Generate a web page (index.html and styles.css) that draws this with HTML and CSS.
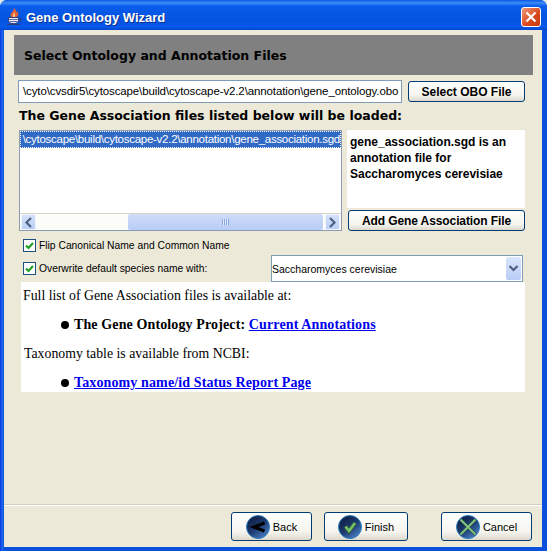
FILE: index.html
```html
<!DOCTYPE html>
<html lang="en">
<head>
  <meta charset="UTF-8" />
  <title>Gene Ontology Wizard</title>
  <link rel="stylesheet" href="styles.css">
</head>
<body>
  <div class="window">
    <div class="titlebar">
      <svg class="java-icon" width="17" height="18" viewBox="0 0 17 18">
        <path d="M8 0c1.500 2 3 3 2.500 5 1-.5 1-1.500 1-2 1.500 2 1 5-1 6H5.500C3.500 7.500 5 5 6.500 4 7 3 8 2 8 0z" fill="#e8622c"/>
        <path d="M8 4c.5 1.500 1.500 2 1 5H7C6.500 7.500 7.500 6 8 4z" fill="#f8c090"/>
        <path d="M2.500 9.500h10v3c0 2-1.500 3-5 3s-5-1-5-3z" fill="#f0f0f8" stroke="#2e3a78"/>
        <path d="M3 11.500h9M3.500 13.500h8" stroke="#5a68a8"/>
        <path d="M12.500 10.500h2.500v2l-2.500 1.500" fill="none" stroke="#2e3a78"/>
        <path d="M1 16.500h13" stroke="#2e3a78"/>
      </svg>
      <span class="title-text">Gene Ontology Wizard</span>
      <div class="close-btn">
        <svg width="12" height="12" viewBox="0 0 12 12"><path d="M1.500 1.500l9 9M10.500 1.500l-9 9" stroke="#fff" stroke-width="2.200"/></svg>
      </div>
    </div>

    <div class="content">
      <div class="banner">Select Ontology and Annotation Files</div>

      <div class="row-obo">
        <div class="field">\cyto\cvsdir5\cytoscape\build\cytoscape-v2.2\annotation\gene_ontology.obo</div>
        <button class="btn btn-obo">Select OBO File</button>
      </div>

      <div class="list-label">The Gene Association files listed below will be loaded:</div>

      <div class="row-list">
        <div class="listbox">
          <div class="list-body">
            <div class="list-item"><span>\cytoscape\build\cytoscape-v2.2\annotation\gene_association.sgd</span></div>
          </div>
          <div class="hscroll">
            <div class="sb-btn">
              <svg width="9" height="11" viewBox="0 0 9 11"><path d="M7 1L2.500 5.500 7 10" fill="none" stroke="#4d6185" stroke-width="2.200"/></svg>
            </div>
            <div class="sb-track">
              <div class="sb-thumb"><span class="sb-grip"></span></div>
            </div>
            <div class="sb-btn">
              <svg width="9" height="11" viewBox="0 0 9 11"><path d="M2 1l4.500 4.500L2 10" fill="none" stroke="#4d6185" stroke-width="2.200"/></svg>
            </div>
          </div>
        </div>
        <div class="side">
          <div class="info">gene_association.sgd is an annotation file for Saccharomyces cerevisiae</div>
          <button class="btn btn-add">Add Gene Association File</button>
        </div>
      </div>

      <div class="row-options">
        <div class="checks">
          <label class="check"><span class="box"><svg width="11" height="11" viewBox="0 0 11 11"><path d="M2 5.500l2.500 2.500L9 3" fill="none" stroke="#21a121" stroke-width="2.200"/></svg></span>Flip Canonical Name and Common Name</label>
          <label class="check"><span class="box"><svg width="11" height="11" viewBox="0 0 11 11"><path d="M2 5.500l2.500 2.500L9 3" fill="none" stroke="#21a121" stroke-width="2.200"/></svg></span>Overwrite default species name with:</label>
        </div>
        <div class="combo">
          <span>Saccharomyces cerevisiae</span>
          <div class="combo-btn">
            <svg width="11" height="9" viewBox="0 0 11 9"><path d="M1.500 2l4 4 4-4" fill="none" stroke="#4d6185" stroke-width="2.200"/></svg>
          </div>
        </div>
      </div>

      <div class="html-pane">
        <p class="pane-line">Full list of Gene Association files is available at:</p>
        <div class="bullet-line"><span class="dot"></span><span><b>The Gene Ontology Project:</b> <a href="#go">Current Annotations</a></span></div>
        <p class="pane-line pane-line-2">Taxonomy table is available from NCBI:</p>
        <div class="bullet-line"><span class="dot"></span><a href="#ncbi">Taxonomy name/id Status Report Page</a></div>
      </div>

      <div class="footer">
        <button class="btn btn-nav btn-back">
          <svg class="ball" width="24" height="24" viewBox="0 0 24 24"><use href="#ball-bg"/><path d="M18.500 8L8 12l10.500 4" fill="none" stroke="#000" stroke-width="3.200"/></svg>
          Back
        </button>
        <button class="btn btn-nav btn-finish">
          <svg class="ball" width="24" height="24" viewBox="0 0 24 24"><use href="#ball-bg"/><path d="M7.500 11.500l3.500 4.500 6-8" fill="none" stroke="#274a3a" stroke-width="4.500"/><path d="M7.500 11.500l3.500 4.500 6-8" fill="none" stroke="#72c266" stroke-width="2.800"/></svg>
          Finish
        </button>
        <button class="btn btn-nav btn-cancel">
          <svg class="ball" width="24" height="24" viewBox="0 0 24 24"><use href="#ball-bg"/><path d="M4.500 4.500l15 15M19.500 4.500l-15 15" fill="none" stroke="#254a58" stroke-width="3.400"/><path d="M4.500 4.500l15 15M19.500 4.500l-15 15" fill="none" stroke="#86c47c" stroke-width="1.800"/></svg>
          Cancel
        </button>
      </div>
    </div>
  </div>

  <svg width="0" height="0" class="defs">
    <defs>
      <linearGradient id="ball-fill" x1="0.150" y1="0.100" x2="0.800" y2="0.950">
        <stop offset="0" stop-color="#0e1f44"/>
        <stop offset="0.500" stop-color="#1d3b70"/>
        <stop offset="1" stop-color="#4a7cc0"/>
      </linearGradient>
      <circle id="ball-bg" cx="12" cy="12" r="11.500" fill="url(#ball-fill)" stroke="#2a7fc0" stroke-width="1"/>
    </defs>
  </svg>
</body>
</html>
```

FILE: styles.css
```css
html, body {
  margin: 0;
  height: 100%;
  overflow: hidden;
}
body {
  font-family: 'Liberation Sans', Arial, sans-serif;
  background: #e8e8e8;
}
.defs { display: block; height: 0; }
.window {
  height: 551px;
  display: flex;
  flex-direction: column;
  background: linear-gradient(90deg, #0831d9 0, #1a6cf0 2px, #0a50dc 4px, #0a50dc 100%);
  border-radius: 7px 7px 0 0;
}
.titlebar {
  height: 30px;
  flex: none;
  display: flex;
  align-items: center;
  padding: 4px 6px 0 6px;
  box-sizing: border-box;
  border-radius: 7px 7px 0 0;
  background: linear-gradient(#0a58e6 0, #3c8cf8 3px, #0a5cec 6px, #0453e0 20px, #0458ea 27px, #0348cc 30px);
}
.java-icon { margin-right: 3px; }
.title-text {
  font-weight: bold;
  font-size: 13px;
  color: #fff;
  text-shadow: 1px 1px 0 #0a2f90;
  flex: 1;
}
.close-btn {
  width: 20px;
  height: 20px;
  display: flex;
  align-items: center;
  justify-content: center;
  box-sizing: border-box;
  border: 1px solid #fff;
  border-radius: 3px;
  background: linear-gradient(135deg, #ef9a7c, #d9481c 60%, #c43a12);
}

.content {
  flex: 1;
  margin: 0 5px 4px 4px;
  background: #ece9d8;
  display: flex;
  flex-direction: column;
  padding: 5px 0 0 0;
  color: #000;
  min-height: 0;
}
.banner {
  height: 40px;
  margin: 0 9px 0 10px;
  background: #808080;
  font-family: 'DejaVu Sans', sans-serif;
  font-weight: bold;
  font-size: 12.5px;
  line-height: 42px;
  padding-left: 10px;
  color: #000;
}
.row-obo {
  display: flex;
  align-items: center;
  gap: 6px;
  margin: 5px 0 0 14px;
  height: 23px;
}
.field {
  width: 384px;
  height: 23px;
  box-sizing: border-box;
  border: 1px solid #7f9db9;
  background: #fff;
  font-size: 11.5px;
  letter-spacing: -0.12px;
  line-height: 21px;
  padding: 0 2px 0 4px;
  white-space: nowrap;
  overflow: hidden;
}
.btn {
  font-family: 'Liberation Sans', Arial, sans-serif;
  font-weight: bold;
  font-size: 12px;
  color: #000;
  box-sizing: border-box;
  border: 1px solid #003c74;
  border-radius: 3px;
  background: linear-gradient(#fff, #f5f4ee 70%, #dcd8cc);
  padding: 0;
}
.btn-obo { width: 117px; height: 21px; }
.list-label {
  font-family: 'DejaVu Sans', sans-serif;
  font-weight: bold;
  font-size: 12.5px;
  height: 16px;
  line-height: 16px;
  margin: 5px 0 0 15px;
  white-space: nowrap;
}
.row-list {
  display: flex;
  margin: 6px 0 0 15px;
  gap: 5px;
  height: 101px;
}
.listbox {
  width: 323px;
  box-sizing: border-box;
  border: 1px solid #8d9bb5;
  background: #fff;
  display: flex;
  flex-direction: column;
}
.list-body { flex: 1; overflow: hidden; }
.list-item {
  height: 17px;
  box-sizing: border-box;
  background: #316ac5;
  color: #fff;
  font-size: 11.5px;
  letter-spacing: -0.27px;
  line-height: 17px;
  outline: 1px dotted #fff;
  outline-offset: -1px;
  white-space: nowrap;
  display: flex;
  justify-content: flex-end;
  overflow: hidden;
  padding: 0 1px;
}
.list-item span { flex: none; }
.hscroll {
  height: 16px;
  display: flex;
  padding: 0 1px;
  background: #fcfcf8;
  border-top: 1px solid #d8d4c8;
}
.sb-btn {
  width: 15px;
  flex: none;
  display: flex;
  align-items: center;
  justify-content: center;
  background: linear-gradient(#d6e2fb, #bccef5);
  border: 1px solid #eef3fd;
  box-sizing: border-box;
  border-radius: 2px;
}
.sb-track { flex: 1; display: flex; justify-content: flex-end; padding-right: 2px; }
.sb-thumb {
  width: 195px;
  display: flex;
  align-items: center;
  justify-content: center;
  background: linear-gradient(#cfdcfa, #b8ccf6);
  border-radius: 2px;
}
.sb-grip {
  width: 7px;
  height: 6px;
  background: repeating-linear-gradient(90deg, #8aa4dc 0 1px, #e6edfc 1px 2px);
}
.side {
  flex: 1;
  display: flex;
  flex-direction: column;
  margin-right: 17px;
}
.info {
  height: 78px;
  background: #fff;
  font-weight: bold;
  font-size: 12px;
  line-height: 16px;
  padding: 4px 2px 0 3px;
  box-sizing: border-box;
}
.btn-add {
  width: 177px;
  height: 21px;
  margin: 2px 0 0 1px;
  letter-spacing: -0.1px;
}
.row-options {
  display: flex;
  margin-top: 3px;
  height: 48px;
  flex: none;
}
.checks {
  width: 267px;
  padding: 5px 0 0 19px;
  box-sizing: border-box;
  display: flex;
  flex-direction: column;
  gap: 10px;
}
.check {
  display: flex;
  align-items: center;
  gap: 3px;
  font-size: 10.3px;
  height: 13px;
  white-space: nowrap;
}
.box {
  width: 13px;
  height: 13px;
  box-sizing: border-box;
  border: 1px solid #1c5180;
  background: #fff;
  display: flex;
  align-items: center;
  justify-content: center;
}
.combo {
  width: 252px;
  height: 27px;
  margin-top: 21px;
  box-sizing: border-box;
  border: 1px solid #7f9db9;
  background: #fff;
  display: flex;
  align-items: center;
  justify-content: space-between;
  font-size: 10.5px;
  padding: 1px 1px 1px 0;
}
.combo-btn {
  width: 15px;
  height: 23px;
  display: flex;
  align-items: center;
  justify-content: center;
  background: linear-gradient(#dbe6fc, #b8ccf6);
  border-radius: 2px;
}
.html-pane {
  margin: 0 17px 0 17px;
  height: 110px;
  flex: none;
  background: #fff;
  font-family: 'Liberation Serif', 'Times New Roman', serif;
  font-size: 13.8px;
  box-sizing: border-box;
  padding-top: 5px;
}
.pane-line {
  margin: 0;
  height: 29px;
  line-height: 18px;
  padding-left: 2px;
  white-space: nowrap;
}
.pane-line-2 { padding-left: 3px; }
.bullet-line {
  height: 29px;
  line-height: 18px;
  padding-left: 40px;
  display: flex;
  align-items: flex-start;
  white-space: pre;
  font-size: 14px;
  letter-spacing: 0.12px;
}
.dot {
  width: 8px;
  height: 8px;
  border-radius: 50%;
  background: #000;
  margin: 5px 5px 0 0;
  flex: none;
}
.bullet-line a {
  color: #0000ee;
  font-weight: bold;
}
.footer {
  margin-top: auto;
  height: 35px;
  flex: none;
  border-top: 1px solid #d0cdbd;
  box-shadow: inset 0 1px 0 #fff;
  display: flex;
  padding-top: 7px;
}
.btn-nav {
  height: 29px;
  display: flex;
  align-items: center;
  justify-content: center;
  gap: 3px;
  font-weight: normal;
  font-size: 11px;
}
.ball { flex: none; }
.btn-back { width: 81px; margin-left: 227px; }
.btn-finish { width: 84px; margin-left: 12px; }
.btn-cancel { width: 91px; margin-left: 33px; }
```
